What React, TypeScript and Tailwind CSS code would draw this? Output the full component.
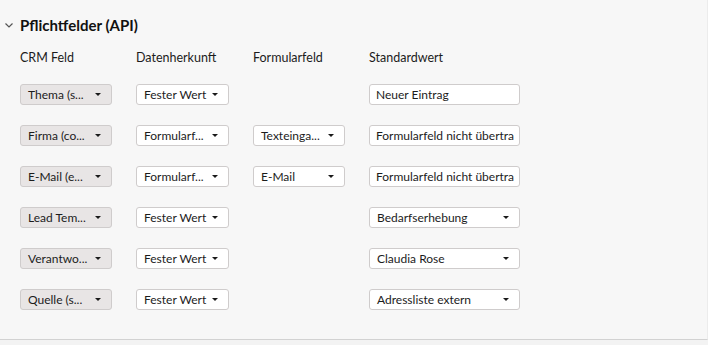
import React from "react";

const Caret = () => (
  <svg width="6" height="3" viewBox="0 0 6 3" className="shrink-0 ml-[4px]">
    <path d="M0 0 L6 0 L3 3 Z" fill="#1a1a1a" />
  </svg>
);

function Select({ text, w, gray = false }: { text: string; w: string; gray?: boolean }) {
  return (
    <div
      className={`${w} h-[21px] flex items-center pl-[7px] pr-[10px] rounded-[3px] border border-[#cfcccc] ${
        gray ? "bg-[#e8e5e5]" : "bg-white"
      }`}
    >
      <span className="flex-1 whitespace-nowrap">{text}</span>
      <Caret />
    </div>
  );
}

function Input({ text }: { text: string }) {
  return (
    <div className="w-[151px] h-[21px] flex items-center pl-[6px] rounded-[3px] border border-[#cfcccc] bg-white overflow-hidden">
      <span className="whitespace-nowrap">{text}</span>
    </div>
  );
}

const rows: { crm: string; src: string; form?: string; std: string; stdSelect: boolean }[] = [
  { crm: "Thema (s...", src: "Fester Wert", std: "Neuer Eintrag", stdSelect: false },
  { crm: "Firma (co...", src: "Formularf...", form: "Texteinga...", std: "Formularfeld nicht übertra", stdSelect: false },
  { crm: "E-Mail (e...", src: "Formularf...", form: "E-Mail", std: "Formularfeld nicht übertra", stdSelect: false },
  { crm: "Lead Tem...", src: "Fester Wert", std: "Bedarfserhebung", stdSelect: true },
  { crm: "Verantwo...", src: "Fester Wert", std: "Claudia Rose", stdSelect: true },
  { crm: "Quelle (s...", src: "Fester Wert", std: "Adressliste extern", stdSelect: true },
];

export default function App() {
  return (
    <div
      className="w-[708px] h-[345px] bg-[#f7f7f7] text-[#1c1c1c] text-[12.5px] flex flex-col"
      style={{ fontFamily: 'Lato, "Noto Sans", sans-serif' }}
    >
      <div className="h-[340px] border-b border-[#d2d2d2] border-r border-r-[#ececec]">
        <div className="flex items-center h-[20px] mt-[15px]">
          <svg width="8" height="5" viewBox="0 0 8 5" className="ml-[5px] mr-[7px]">
            <path d="M0.5 0.5 L4 4 L7.5 0.5" stroke="#555" strokeWidth="1.2" fill="none" />
          </svg>
          <span className="text-[15px] font-bold text-[#111]">Pflichtfelder (API)</span>
        </div>
        <div className="pl-[20px] mt-[14px]">
          <div className="grid grid-cols-[116px_117px_116px_160px] h-[18px] items-center leading-none">
            <span>CRM Feld</span>
            <span>Datenherkunft</span>
            <span>Formularfeld</span>
            <span>Standardwert</span>
          </div>
          <div className="mt-[17px] flex flex-col gap-[20px] text-[12px]">
            {rows.map((r, i) => (
              <div key={i} className="grid grid-cols-[116px_117px_116px_160px] items-center">
                <Select text={r.crm} w="w-[92px]" gray />
                <Select text={r.src} w="w-[93px]" />
                <div>{r.form ? <Select text={r.form} w="w-[92px]" /> : null}</div>
                <div>
                  {r.stdSelect ? <Select text={r.std} w="w-[151px]" /> : <Input text={r.std} />}
                </div>
              </div>
            ))}
          </div>
        </div>
      </div>
      <div className="flex-1 bg-[#f3f3f3]" />
    </div>
  );
}
